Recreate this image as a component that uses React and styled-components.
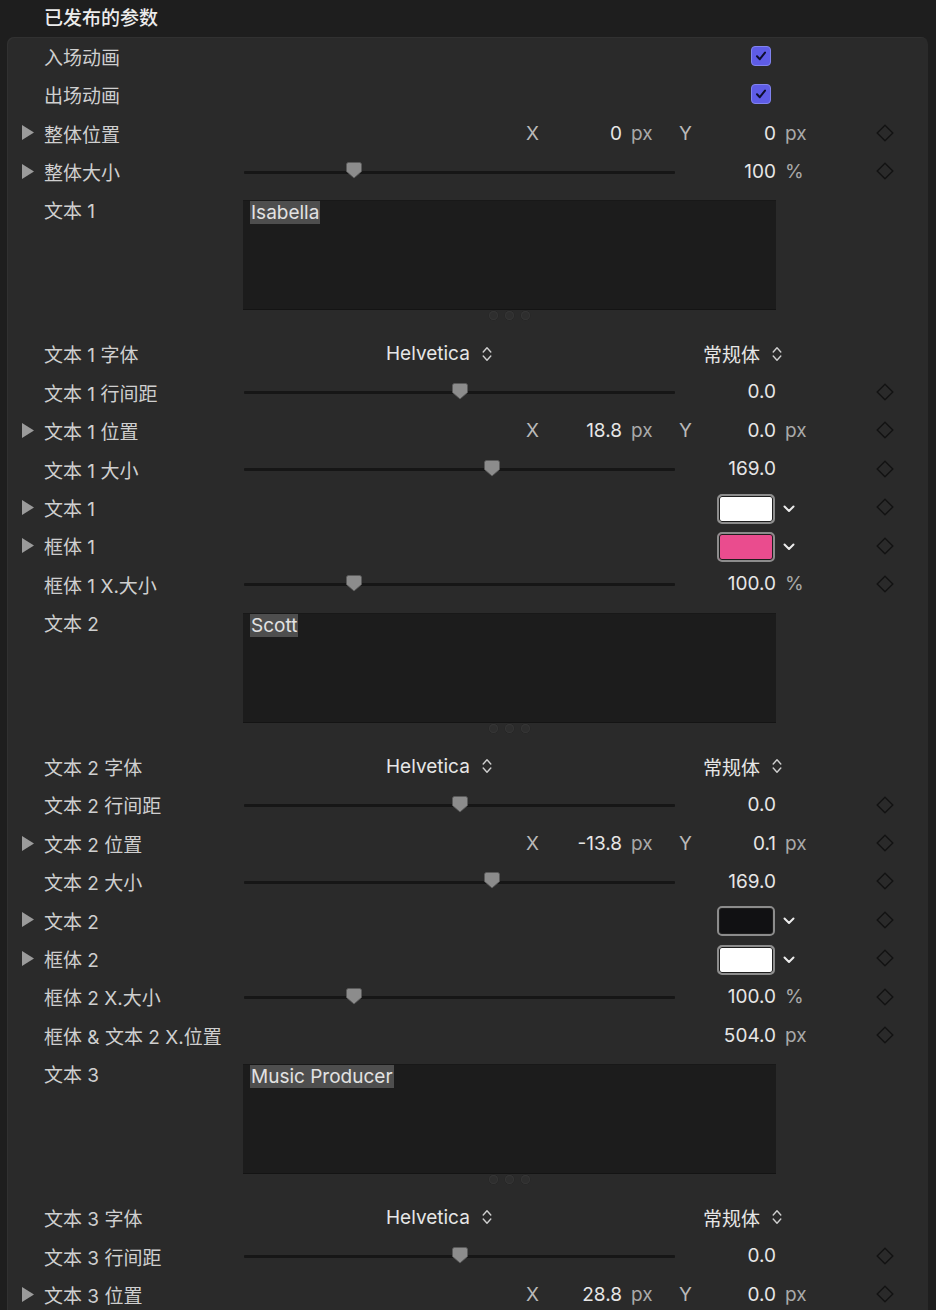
import React from "react";
import styled, { createGlobalStyle } from "styled-components";

const Global = createGlobalStyle`
  html, body { margin: 0; padding: 0; background: #1e1e1e; overflow: hidden; }
  body { font-family: "Inter", "Noto Sans CJK SC", sans-serif; -webkit-font-smoothing: antialiased; }
`;

const R = 38.4;

const Page = styled.div`
  width: 936px;
  min-height: 1310px;
  background: #1e1e1e;
`;

const Header = styled.div`
  height: 36.8px;
  box-sizing: border-box;
  padding-top: 2px;
  line-height: 34.8px;
  padding-left: 44px;
  font-size: 19px;
  font-weight: 500;
  color: #ececec;
`;

const Panel = styled.div`
  margin-left: 7px;
  width: 921px;
  background: #2a2a2a;
  border-radius: 7px 7px 0 0;
  box-shadow: inset 1px 1px 0 #313131;
  min-height: 1300px;
`;

const Row = styled.div`
  display: grid;
  grid-template-columns: 37px 200px 431px 101px 91px 36px 1fr;
  height: ${(p) => (p.$tall ? 144 : R)}px;
  align-items: ${(p) => (p.$tall ? "start" : "center")};
  font-size: 19px;
`;

const ArrowCell = styled.div`
  grid-column: 1;
  padding-left: 15px;
  display: flex;
  align-items: center;
  height: ${R}px;
`;

const Label = styled.div`
  grid-column: 2;
  color: #cfcfcf;
  white-space: nowrap;
  box-sizing: border-box;
  height: ${R}px;
  padding-top: 5px;
  line-height: ${R - 5}px;
`;

const Value = styled.div`
  grid-column: 4;
  justify-self: end;
  color: #e6e6e6;
  white-space: nowrap;
`;

const Unit = styled.div`
  grid-column: 5;
  padding-left: 9px;
  color: #a9a9a9;
`;

const DiamondCell = styled.div`
  grid-column: 6;
  justify-self: center;
  display: flex;
`;

const CheckCell = styled.div`
  grid-column: 4;
  justify-self: end;
  margin-right: 5px;
  display: flex;
`;

const CheckBox = styled.div`
  width: 20px;
  height: 20px;
  box-sizing: border-box;
  border-radius: 4px;
  background: #5e5ce6;
  border: 1px solid #8183ee;
  display: flex;
  align-items: center;
  justify-content: center;
`;

const SliderCell = styled.div`
  grid-column: 3;
  position: relative;
  height: 16px;
  display: flex;
  align-items: center;
`;

const Track = styled.div`
  width: 100%;
  height: 3px;
  margin-top: 2px;
  background: #161616;
  border-radius: 1px;
`;

const Thumb = styled.svg`
  position: absolute;
  top: -1px;
  width: 16px;
  height: 17px;
  margin-left: -8px;
`;

const XYGroup = styled.div`
  grid-column: 3 / 6;
  display: grid;
  grid-template-columns: 282px 24px 72px 54px 14px 86px auto;
  align-items: center;
  white-space: nowrap;
  padding-top: 1px;
`;

const Axis = styled.div`
  grid-column: ${(p) => p.$col};
  padding-left: ${(p) => p.$pad || 0}px;
  color: #b9b9b9;
`;

const XYValue = styled.div`
  grid-column: ${(p) => p.$col};
  justify-self: end;
  color: #e6e6e6;
`;

const XYUnit = styled.div`
  grid-column: ${(p) => p.$col};
  padding-left: 9px;
  color: #a9a9a9;
`;

const PopupA = styled.div`
  grid-column: 3;
  padding-left: 142px;
  display: flex;
  align-items: center;
  gap: 12px;
  color: #e6e6e6;
`;

const PopupB = styled.div`
  grid-column: 4 / 6;
  padding-left: 28px;
  display: flex;
  align-items: center;
  gap: 12px;
  color: #e6e6e6;
`;

const ColorCell = styled.div`
  grid-column: 4 / 6;
  padding-left: 42px;
  display: flex;
  align-items: center;
  gap: 8px;
  margin-top: 3px;
`;

const Swatch = styled.div`
  width: 58px;
  height: 30px;
  box-sizing: border-box;
  border-radius: 5px;
  border: 2px solid #8c8c8c;
  background: ${(p) => p.$color};
  box-shadow: inset 0 0 0 1px #1e1e1e;
`;

const TextArea = styled.div`
  grid-column: 3 / 5;
  margin-left: -1px;
  margin-top: 9.6px;
  display: flex;
  flex-direction: column;
  align-items: center;
`;

const Box = styled.div`
  align-self: stretch;
  height: 110px;
  box-sizing: border-box;
  background: #1c1c1c;
  border-top: 1px solid #181818;
  border-bottom: 1px solid #141414;
  padding: 0 0 0 7px;
`;

const Selected = styled.span`
  display: inline-block;
  background: #4e4e4e;
  color: #e2e2e2;
  line-height: 23px;
  height: 23px;
  padding: 0 1px;
  margin-top: -1px;
`;

const Dots = styled.div`
  display: flex;
  gap: 7px;
  margin-top: 1.5px;
`;

const Dot = styled.div`
  width: 9px;
  height: 9px;
  border-radius: 50%;
  background: #2e2e2e;
  box-shadow: inset 0 0 0 1px #363636, 0 0 0 0.5px #262626;
`;

const Arrow = () => (
  <svg width="12" height="15" viewBox="0 0 12 15">
    <polygon points="0,0 12,7.5 0,15" fill="#9b9b9b" />
  </svg>
);

const Diamond = () => (
  <svg width="18" height="18" viewBox="0 0 18 18">
    <polygon points="9,1.2 16.8,9 9,16.8 1.2,9" fill="none" stroke="#131313" strokeWidth="1.4" />
  </svg>
);

const Check = () => (
  <svg width="14" height="14" viewBox="0 0 14 14">
    <path d="M3 7.3 L5.8 10.2 L11 3.6" fill="none" stroke="#0f0f2e" strokeWidth="2" strokeLinecap="round" strokeLinejoin="round" />
  </svg>
);

const UpDown = () => (
  <svg width="10" height="16" viewBox="0 0 10 16">
    <path d="M1.2 6 L5 1.8 L8.8 6 M1.2 10 L5 14.2 L8.8 10" fill="none" stroke="#cfcfcf" strokeWidth="1.4" strokeLinecap="round" strokeLinejoin="round" />
  </svg>
);

const ChevronDown = () => (
  <svg width="12" height="8" viewBox="0 0 12 8">
    <path d="M1.5 1.5 L6 6 L10.5 1.5" fill="none" stroke="#ececec" strokeWidth="2" strokeLinecap="round" strokeLinejoin="round" />
  </svg>
);

const ThumbShape = () => (
  <path d="M2.5 0.5 H13.5 Q15.5 0.5 15.5 2.5 V9.5 L8 16 L0.5 9.5 V2.5 Q0.5 0.5 2.5 0.5 Z" fill="#8c8c8c" stroke="#5a5a5a" strokeWidth="0.8" />
);

const rows = [
  { t: "check", label: "入场动画" },
  { t: "check", label: "出场动画" },
  { t: "xy", label: "整体位置", arrow: true, x: "0", y: "0" },
  { t: "slider", label: "整体大小", arrow: true, pos: 0.255, value: "100", unit: "%" },
  { t: "text", label: "文本 1", text: "Isabella" },
  { t: "popup", label: "文本 1 字体" },
  { t: "slider", label: "文本 1 行间距", pos: 0.501, value: "0.0" },
  { t: "xy", label: "文本 1 位置", arrow: true, x: "18.8", y: "0.0" },
  { t: "slider", label: "文本 1 大小", pos: 0.575, value: "169.0" },
  { t: "color", label: "文本 1", arrow: true, color: "#ffffff" },
  { t: "color", label: "框体 1", arrow: true, color: "#ea4c8e" },
  { t: "slider", label: "框体 1 X.大小", pos: 0.255, value: "100.0", unit: "%" },
  { t: "text", label: "文本 2", text: "Scott" },
  { t: "popup", label: "文本 2 字体" },
  { t: "slider", label: "文本 2 行间距", pos: 0.501, value: "0.0" },
  { t: "xy", label: "文本 2 位置", arrow: true, x: "-13.8", y: "0.1" },
  { t: "slider", label: "文本 2 大小", pos: 0.575, value: "169.0" },
  { t: "color", label: "文本 2", arrow: true, color: "#111113" },
  { t: "color", label: "框体 2", arrow: true, color: "#ffffff" },
  { t: "slider", label: "框体 2 X.大小", pos: 0.255, value: "100.0", unit: "%" },
  { t: "value", label: "框体 & 文本 2 X.位置", value: "504.0", unit: "px" },
  { t: "text", label: "文本 3", text: "Music Producer" },
  { t: "popup", label: "文本 3 字体" },
  { t: "slider", label: "文本 3 行间距", pos: 0.501, value: "0.0" },
  { t: "xy", label: "文本 3 位置", arrow: true, x: "28.8", y: "0.0" },
];

function ParamRow({ r }) {
  const diamond = (
    <DiamondCell>
      <Diamond />
    </DiamondCell>
  );
  return (
    <Row $tall={r.t === "text"}>
      {r.arrow && (
        <ArrowCell>
          <Arrow />
        </ArrowCell>
      )}
      <Label>{r.label}</Label>
      {r.t === "check" && (
        <CheckCell>
          <CheckBox>
            <Check />
          </CheckBox>
        </CheckCell>
      )}
      {r.t === "xy" && (
        <>
          <XYGroup>
            <Axis $col={2}>X</Axis>
            <XYValue $col={3}>{r.x}</XYValue>
            <XYUnit $col={4}>px</XYUnit>
            <Axis $col={5} $pad={3}>Y</Axis>
            <XYValue $col={6}>{r.y}</XYValue>
            <XYUnit $col={7}>px</XYUnit>
          </XYGroup>
          {diamond}
        </>
      )}
      {r.t === "slider" && (
        <>
          <SliderCell>
            <Track />
            <Thumb viewBox="0 0 16 17" style={{ left: `${r.pos * 100}%` }}>
              <ThumbShape />
            </Thumb>
          </SliderCell>
          <Value>{r.value}</Value>
          {r.unit && <Unit>{r.unit}</Unit>}
          {diamond}
        </>
      )}
      {r.t === "value" && (
        <>
          <Value>{r.value}</Value>
          <Unit>{r.unit}</Unit>
          {diamond}
        </>
      )}
      {r.t === "popup" && (
        <>
          <PopupA>
            <span>Helvetica</span>
            <UpDown />
          </PopupA>
          <PopupB>
            <span>常规体</span>
            <UpDown />
          </PopupB>
        </>
      )}
      {r.t === "color" && (
        <>
          <ColorCell>
            <Swatch $color={r.color} />
            <ChevronDown />
          </ColorCell>
          {diamond}
        </>
      )}
      {r.t === "text" && (
        <TextArea>
          <Box>
            <Selected>{r.text}</Selected>
          </Box>
          <Dots>
            <Dot />
            <Dot />
            <Dot />
          </Dots>
        </TextArea>
      )}
    </Row>
  );
}

export default function App() {
  return (
    <Page>
      <Global />
      <Header>已发布的参数</Header>
      <Panel>
        {rows.map((r, i) => (
          <ParamRow key={i} r={r} />
        ))}
      </Panel>
    </Page>
  );
}
